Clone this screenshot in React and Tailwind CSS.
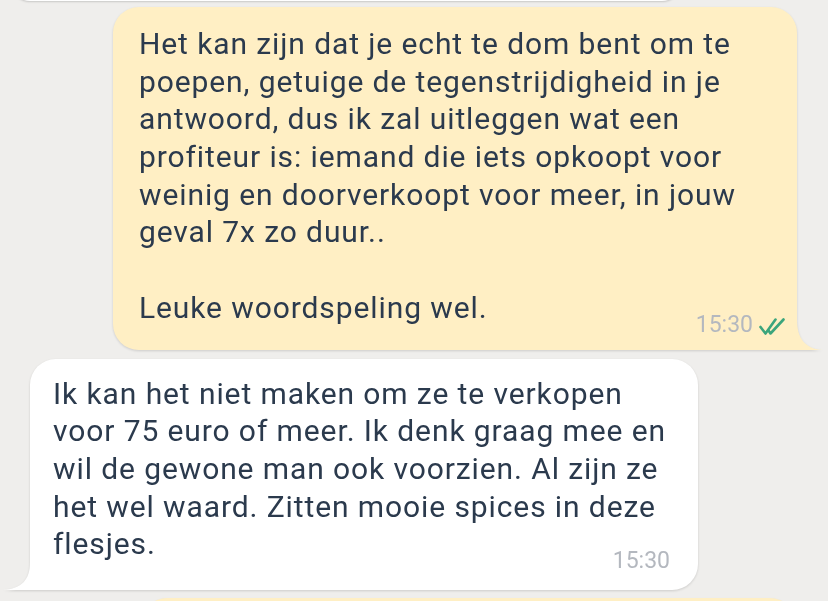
import React from "react";

const font = { fontFamily: "Roboto, 'Noto Sans', sans-serif" };

function DoubleTick() {
    return (
        <svg width="26" height="17" viewBox="0 0 26 17" fill="none" className="ml-[6px] mb-[1px]">
            <path d="M1.5 9 L6.5 15.5 L16.5 1.5" stroke="#3ba57c" strokeWidth="2.6" strokeLinecap="round" strokeLinejoin="round" />
            <path d="M9.5 12.5 L11.5 15.5 L24.5 1.5" stroke="#3ba57c" strokeWidth="2.6" strokeLinecap="round" strokeLinejoin="round" />
        </svg>
    );
}

function OutgoingBubble({lines, time}) {
    return (
        <div className="relative ml-[113px] w-[684px] drop-shadow-[0_1px_1px_rgba(0,0,0,0.14)]">
            <div className="bg-[#ffefc4] rounded-[26px] rounded-br-none pt-[18px] pl-[26px] pr-[12px] pb-[14px]">
                <div className="text-[30px] leading-[37.7px] tracking-[0.9px] text-[#2b3a4d] whitespace-nowrap">
                    {lines.map((l, i) => (
                        <div key={i} className="h-[37.7px]">{l}</div>
                    ))}
                </div>
                <div className="flex justify-end items-end -mt-[14px]">
                    <span className="text-[23px] leading-[23px] text-[#b4b8bf]">{time}</span>
                    <DoubleTick />
                </div>
            </div>
            <svg width="26" height="30" viewBox="0 0 26 30" className="absolute -right-[26px] bottom-0">
                <path d="M0 0 C0 18 8 29 26 30 L0 30 Z" fill="#ffefc4" />
            </svg>
        </div>
    );
}

function IncomingBubble({lines, time}) {
    return (
        <div className="relative ml-[30px] w-[668px] drop-shadow-[0_1px_1px_rgba(0,0,0,0.14)]">
            <div className="bg-white rounded-[26px] rounded-bl-none pt-[16px] pl-[23px] pr-[28px] pb-[18px]">
                <div className="text-[30px] leading-[37.7px] tracking-[0.9px] text-[#2b3a4d] whitespace-nowrap">
                    {lines.map((l, i) => (
                        <div key={i} className="h-[37.7px]">{l}</div>
                    ))}
                </div>
                <div className="flex justify-end -mt-[14px]">
                    <span className="text-[23px] leading-[23px] text-[#b4b8bf]">{time}</span>
                </div>
            </div>
            <svg width="27" height="27" viewBox="0 0 27 27" className="absolute -left-[27px] bottom-0">
                <path d="M27 0 C27 16 19 26 0 27 L27 27 Z" fill="#ffffff" />
            </svg>
        </div>
    );
}

export default function App() {
    const outLines = [
        "Het kan zijn dat je echt te dom bent om te",
        "poepen, getuige de tegenstrijdigheid in je",
        "antwoord, dus ik zal uitleggen wat een",
        "profiteur is: iemand die iets opkoopt voor",
        "weinig en doorverkoopt voor meer, in jouw",
        "geval 7x zo duur..",
        "",
        "Leuke woordspeling wel.",
    ];
    const inLines = [
        "Ik kan het niet maken om ze te verkopen",
        "voor 75 euro of meer. Ik denk graag mee en",
        "wil de gewone man ook voorzien. Al zijn ze",
        "het wel waard. Zitten mooie spices in deze",
        "flesjes.",
    ];

    return (
        <div className="w-[828px] h-[601px] overflow-hidden bg-[#efeeec]" style={font}>
            <div className="flex flex-col">
                <div className="ml-[10px] w-[672px] h-[40px] -mt-[39px] bg-white rounded-[26px] shadow-[0_1px_2px_rgba(0,0,0,0.16)]" />
                <div className="mt-[6px]">
                    <OutgoingBubble lines={outLines} time="15:30" />
                </div>
                <div className="mt-[9px]">
                    <IncomingBubble lines={inLines} time="15:30" />
                </div>
                <div className="mt-[8px] ml-[141px] w-[655px] h-[80px] bg-[#ffefc4] rounded-[26px] shadow-[0_1px_2px_rgba(0,0,0,0.14)]" />
            </div>
        </div>
    );
}
